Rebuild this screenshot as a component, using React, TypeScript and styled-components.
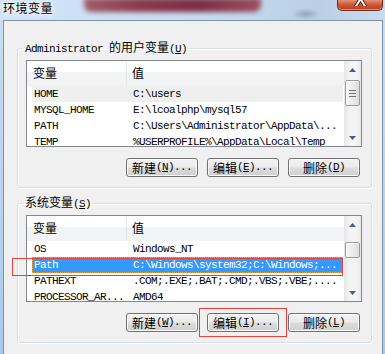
import * as React from "react"
import styled, { createGlobalStyle } from "styled-components"

const MONO = `"Liberation Mono", "Noto Sans CJK SC", monospace`
const HAN = `"Noto Sans CJK SC", "Microsoft YaHei", sans-serif`

const GlobalStyle = createGlobalStyle`
    html, body {
        margin: 0;
        padding: 0;
        overflow: hidden;
        background: #c3daf0;
    }
    #root {
        width: 385px;
        height: 354px;
    }
`

interface Row {
    name: string
    value: string
    tone?: "plain" | "muted" | "selected"
    callout?: boolean
}

interface ScrollProps {
    thumbTop: number
    thumbHeight: number
    grip: boolean
}

const Window = styled.div`
    width: 385px;
    height: 354px;
    overflow: hidden;
    display: flex;
    flex-direction: column;
    background: linear-gradient(180deg, #c8def3 0%, #b9d3ec 55%, #a9c9ea 100%);
`

const TitleBar = styled.div`
    flex: none;
    height: 20px;
    display: flex;
    align-items: flex-start;
    background:
        radial-gradient(ellipse 14px 6px at 306px 14px, rgba(120, 135, 150, 0.55), rgba(120, 135, 150, 0) 100%),
        linear-gradient(90deg, #d2e4f6 0%, #c6dcf1 55%, #b9cfe4 82%, #c8dcf0 100%);
`

const Caption = styled.span`
    margin: 0 0 0 3px;
    font-family: ${HAN};
    font-size: 12px;
    line-height: 15px;
    letter-spacing: 0.5px;
    color: #000;
    text-shadow: 0 0 3px #fff, 0 0 6px #fff, 0 0 8px #fff;
`

const BlurredGlass = styled.div`
    width: 177px;
    height: 14px;
    margin: -2px 0 0 31px;
    border-radius: 0 0 7px 7px;
    background: linear-gradient(90deg, #a35d6c 0%, #8a3a4d 30%, #7d2e42 65%, #9a5060 100%);
    filter: blur(2.5px);
`

const CloseButton = styled.div`
    width: 46px;
    height: 11px;
    margin: 0 2px 0 auto;
    display: flex;
    justify-content: center;
    border: 1px solid #6b2a1e;
    border-top: none;
    border-radius: 0 0 5px 5px;
    box-sizing: border-box;
    background: linear-gradient(180deg, #e58f74 0%, #cf5a3c 45%, #b93a20 100%);
    box-shadow: inset 0 -1px 0 #e98a6a;
`

const Client = styled.div`
    flex: 1;
    margin: 0 2px 0 3px;
    padding: 19px 10px 0 13px;
    border: 1px solid #7f91a9;
    border-bottom: none;
    background: #f0f0f0;
    display: flex;
    flex-direction: column;
`

const Group = styled.fieldset`
    width: 355px;
    box-sizing: border-box;
    margin: 0;
    padding: 0 9px 10px 8px;
    min-width: 0;
    border: 1px solid #d5dfe5;
    border-radius: 3px;
    box-shadow: inset 1px 1px 0 #fff, 1px 1px 0 #fff;

    & + & {
        margin-top: 7px;
    }
`

const Legend = styled.legend`
    margin-left: -4px;
    padding: 0 3px;
    font-family: ${MONO};
    font-size: 11px;
    line-height: 13px;
    letter-spacing: -0.6px;
    color: #000;
    white-space: nowrap;
`

const Han = styled.span`
    font-family: ${HAN};
    font-size: 12px;
    letter-spacing: 0;
`

const ListFrame = styled.div`
    position: relative;
    margin-top: 4px;
`

const ListBox = styled.div`
    height: 87px;
    box-sizing: border-box;
    border: 1px solid #828790;
    background: #fff;
    display: flex;
    overflow: hidden;
`

const ListBody = styled.div`
    flex: 1;
    min-width: 0;
    display: flex;
    flex-direction: column;
`

const Header = styled.div`
    flex: none;
    height: 25px;
    display: grid;
    grid-template-columns: 100px 1fr;
    background: linear-gradient(180deg, #fff 0%, #fff 42%, #f3f4f6 43%, #f1f2f4 100%);
`

const HeaderCell = styled.div<{ $first?: boolean }>`
    padding-left: ${(p) => (p.$first ? 6 : 5)}px;
    border-right: ${(p) => (p.$first ? "1px solid #e3e5e8" : "none")};
    font-family: ${HAN};
    font-size: 12px;
    line-height: 24px;
    color: #000;
`

const RowLine = styled.div<{ $tone: string }>`
    flex: none;
    height: 16px;
    margin: 0 1px 0 5px;
    display: grid;
    grid-template-columns: 95px 1fr;
    background: ${(p) => (p.$tone === "selected" ? "#3399ff" : p.$tone === "muted" ? "#efefef" : "transparent")};
    color: ${(p) => (p.$tone === "selected" ? "#fff" : "#000")};
    outline: ${(p) => (p.$tone === "selected" ? "1px dotted #f2a23c" : "none")};
    outline-offset: -1px;
`

const Cell = styled.div<{ $first?: boolean }>`
    padding-left: ${(p) => (p.$first ? 2 : 6)}px;
    overflow: hidden;
    white-space: nowrap;
    font-family: ${MONO};
    font-size: 11px;
    line-height: 16px;
    letter-spacing: -0.6px;
`

const ScrollBar = styled.div`
    flex: none;
    width: 17px;
    display: flex;
    flex-direction: column;
    background: linear-gradient(90deg, #e6e6e6 0%, #f4f4f4 35%, #f4f4f4 70%, #eaeaea 100%);
`

const ArrowBox = styled.div<{ $end?: boolean }>`
    flex: none;
    height: 17px;
    margin-top: ${(p) => (p.$end ? "auto" : "0")};
    display: flex;
    align-items: center;
    justify-content: center;
`

const Thumb = styled.div`
    flex: none;
    margin: 0 1px;
    box-sizing: border-box;
    border: 1px solid #979ca3;
    border-radius: 2px;
    background: linear-gradient(90deg, #f6f6f6 0%, #ececec 50%, #dcdcdc 100%);
    box-shadow: inset 1px 1px 0 #fff;
    display: flex;
    align-items: center;
    justify-content: center;
`

const Callout = styled.span`
    position: absolute;
    box-sizing: border-box;
    border: 1px solid #e8403b;
    pointer-events: none;
`

const RowCallout = styled(Callout)<{ $row: number }>`
    left: -14px;
    top: ${(p) => 27 + p.$row * 16}px;
    width: 331px;
    height: 18px;
`

const ButtonCallout = styled(Callout)`
    left: -9px;
    right: -9px;
    top: -6px;
    bottom: -6px;
`

const ButtonRow = styled.div`
    margin-top: 11px;
    padding-right: 2px;
    display: flex;
    justify-content: flex-end;
    gap: 9px;
`

const PushButton = styled.div`
    position: relative;
    width: 72px;
    height: 19px;
    box-sizing: border-box;
    border: 1px solid #707070;
    border-radius: 3px;
    background: linear-gradient(180deg, #f2f2f2 0%, #ebebeb 48%, #dddddd 52%, #cfcfcf 100%);
    box-shadow: inset 0 0 0 1px #fbfbfb;
    display: flex;
    align-items: center;
    justify-content: center;
    font-family: ${MONO};
    font-size: 11px;
    line-height: 17px;
    letter-spacing: -0.6px;
    color: #000;
    white-space: nowrap;
`

const Arrow = ({ down }: { down?: boolean }) => (
    <svg width="7" height="4" viewBox="0 0 7 4">
        <path d={down ? "M0 0 H7 L3.5 4 Z" : "M0 4 H7 L3.5 0 Z"} fill="#4d5e7b" />
    </svg>
)

const Grip = () => (
    <svg width="7" height="7" viewBox="0 0 7 7">
        <path d="M0 0.5 H7 M0 3.5 H7 M0 6.5 H7" stroke="#6b7380" strokeWidth="1" />
    </svg>
)

const Scroller = ({ thumbTop, thumbHeight, grip }: ScrollProps) => (
    <ScrollBar>
        <ArrowBox>
            <Arrow />
        </ArrowBox>
        <Thumb style={{ marginTop: thumbTop, height: thumbHeight }}>{grip && <Grip />}</Thumb>
        <ArrowBox $end>
            <Arrow down />
        </ArrowBox>
    </ScrollBar>
)

const Mnemonic = ({ label, keyName, dots }: { label: string; keyName: string; dots?: boolean }) => (
    <>
        <Han>{label}</Han>(<u>{keyName}</u>){dots ? "..." : ""}
    </>
)

const VarList = ({ rows, scroll }: { rows: Array<Row>; scroll: ScrollProps }) => {
    const marked = rows.findIndex((r) => r.callout)
    return (
        <ListFrame>
            <ListBox>
                <ListBody>
                    <Header>
                        <HeaderCell $first>变量</HeaderCell>
                        <HeaderCell>值</HeaderCell>
                    </Header>
                    {rows.map((row) => (
                        <RowLine key={row.name} $tone={row.tone || "plain"}>
                            <Cell $first>{row.name}</Cell>
                            <Cell>{row.value}</Cell>
                        </RowLine>
                    ))}
                </ListBody>
                <Scroller {...scroll} />
            </ListBox>
            {marked >= 0 && <RowCallout $row={marked} />}
        </ListFrame>
    )
}

const userRows: Array<Row> = [
    { name: "HOME", value: "C:\\users", tone: "muted" },
    { name: "MYSQL_HOME", value: "E:\\lcoalphp\\mysql57" },
    { name: "PATH", value: "C:\\Users\\Administrator\\AppData\\..." },
    { name: "TEMP", value: "%USERPROFILE%\\AppData\\Local\\Temp" },
]

const systemRows: Array<Row> = [
    { name: "OS", value: "Windows_NT" },
    { name: "Path", value: "C:\\Windows\\system32;C:\\Windows;...", tone: "selected", callout: true },
    { name: "PATHEXT", value: ".COM;.EXE;.BAT;.CMD;.VBS;.VBE;...." },
    { name: "PROCESSOR_AR...", value: "AMD64" },
]

export default function App() {
    return (
        <>
            <GlobalStyle />
            <Window>
                <TitleBar>
                    <Caption>环境变量</Caption>
                    <BlurredGlass />
                    <CloseButton>
                        <svg width="13" height="6" viewBox="0 0 13 6">
                            <path d="M1.5 7 L6.5 -1 L11.5 7" fill="none" stroke="#4a1d14" strokeWidth="4" />
                            <path d="M1.5 7 L6.5 -1 L11.5 7" fill="none" stroke="#fff" strokeWidth="2" />
                        </svg>
                    </CloseButton>
                </TitleBar>
                <Client>
                    <Group>
                        <Legend>
                            Administrator <Han>的用户变量</Han>(<u>U</u>)
                        </Legend>
                        <VarList rows={userRows} scroll={{ thumbTop: 2, thumbHeight: 26, grip: true }} />
                        <ButtonRow>
                            <PushButton>
                                <Mnemonic label="新建" keyName="N" dots />
                            </PushButton>
                            <PushButton>
                                <Mnemonic label="编辑" keyName="E" dots />
                            </PushButton>
                            <PushButton>
                                <Mnemonic label="删除" keyName="D" />
                            </PushButton>
                        </ButtonRow>
                    </Group>
                    <Group>
                        <Legend>
                            <Han>系统变量</Han>(<u>S</u>)
                        </Legend>
                        <VarList rows={systemRows} scroll={{ thumbTop: 9, thumbHeight: 16, grip: false }} />
                        <ButtonRow>
                            <PushButton>
                                <Mnemonic label="新建" keyName="W" dots />
                            </PushButton>
                            <PushButton>
                                <Mnemonic label="编辑" keyName="I" dots />
                                <ButtonCallout />
                            </PushButton>
                            <PushButton>
                                <Mnemonic label="删除" keyName="L" />
                            </PushButton>
                        </ButtonRow>
                    </Group>
                </Client>
            </Window>
        </>
    )
}
